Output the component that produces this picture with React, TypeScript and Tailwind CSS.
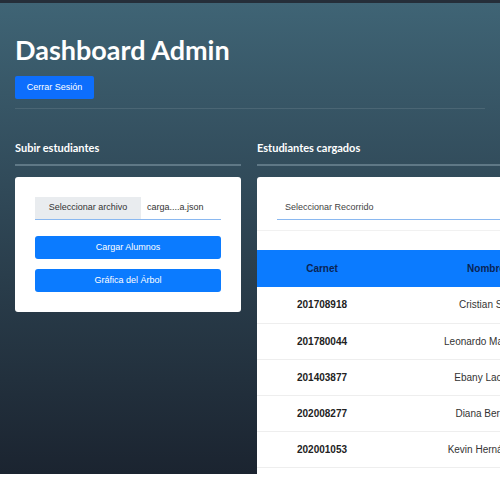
import React from "react";

interface Student {
  carnet: string;
  nombre: string;
}

const students: Student[] = [
  { carnet: "201708918", nombre: "Cristian Suy" },
  { carnet: "201780044", nombre: "Leonardo Martínez" },
  { carnet: "201403877", nombre: "Ebany Lacayo" },
  { carnet: "202008277", nombre: "Diana Berdúo" },
  { carnet: "202001053", nombre: "Kevin Hernández" },
];

const App: React.FC = () => {
  return (
    <div className="w-[500px] h-[501px] overflow-hidden bg-white font-['Liberation_Sans',Arial,sans-serif]">
      <div className="h-[474px] border-t-[3px] border-[#252e39] bg-gradient-to-b from-[#3f6475] to-[#1b2430] px-[15px]">
        {/* Header */}
        <h1 className="mt-[31px] text-[27px] leading-[31px] font-bold text-white font-['Lato',sans-serif]">
          Dashboard Admin
        </h1>
        <button className="mt-[11px] h-[23px] w-[79px] rounded-[2px] bg-[#0d6efd] text-[9px] text-white">
          Cerrar Sesión
        </button>
        <div className="mt-[9px] h-px bg-white/10" />

        {/* Sections */}
        <div className="mt-[32px] grid grid-cols-[226px_400px] gap-x-4">
          <div>
            <h2 className="text-[11px] leading-[14px] font-bold text-white font-['Lato',sans-serif]">
              Subir estudiantes
            </h2>
            <div className="mt-[9px] h-[2px] bg-[#5f7886]" />
            <div className="mt-[11px] rounded-[3px] bg-white p-5">
              <div className="flex h-[23px] border-b border-[#8ab8f0] text-[9px] text-[#333]">
                <span className="flex w-[106px] items-center justify-center bg-[#e9ecef]">
                  Seleccionar archivo
                </span>
                <span className="flex items-center pl-[6px]">carga....a.json</span>
              </div>
              <button className="mt-4 h-[23px] w-full rounded-[3px] bg-[#0b7bff] text-[9px] text-white">
                Cargar Alumnos
              </button>
              <button className="mt-[10px] h-[23px] w-full rounded-[3px] bg-[#0b7bff] text-[9px] text-white">
                Gráfica del Árbol
              </button>
            </div>
          </div>

          <div>
            <h2 className="text-[11px] leading-[14px] font-bold text-white font-['Lato',sans-serif]">
              Estudiantes cargados
            </h2>
            <div className="mt-[9px] h-[2px] bg-[#5f7886]" />
            <div className="mt-[11px] rounded-tl-[3px] bg-white pt-5 pb-6">
              <div className="mx-5 flex h-[23px] items-center border-b border-[#8ab8f0] pl-2 text-[9px] text-[#444]">
                Seleccionar Recorrido
              </div>
              <div className="mt-[10px] h-px bg-[#f1f1f1]" />
              <table className="mt-[19px] w-full table-fixed border-collapse text-[10px]">
                <colgroup>
                  <col className="w-[130px]" />
                  <col className="w-[198px]" />
                  <col />
                </colgroup>
                <thead>
                  <tr className="h-[37px] bg-[#0b7bff] text-[#0a2454]">
                    <th className="font-bold">Carnet</th>
                    <th className="font-bold">Nombre</th>
                    <th className="font-bold">Curso</th>
                  </tr>
                </thead>
                <tbody>
                  {students.map((s) => (
                    <tr key={s.carnet} className="h-9 border-b border-[#eeeeee]">
                      <td className="text-center font-bold text-[#222]">{s.carnet}</td>
                      <td className="text-center text-[#333]">{s.nombre}</td>
                      <td className="text-center text-[#333]">—</td>
                    </tr>
                  ))}
                </tbody>
              </table>
            </div>
          </div>
        </div>
      </div>
    </div>
  );
};

export default App;
